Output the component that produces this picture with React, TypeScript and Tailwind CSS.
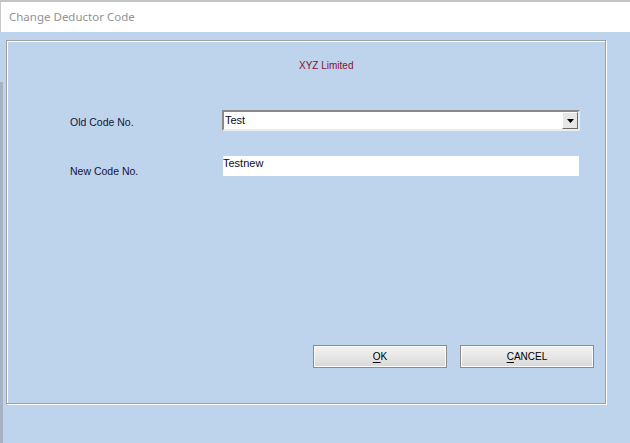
import React from "react";

// Classic WinForms-style dialog: "Change Deductor Code"

function Underlined({ first, rest }: { first: string; rest: string }) {
  return (
    <span>
      <span className="underline underline-offset-[2px]">{first}</span>
      {rest}
    </span>
  );
}

function DialogButton({ children }: { children: React.ReactNode }) {
  return (
    <button
      type="button"
      className="w-[134px] h-[23px] border border-[#8c8c8c] bg-gradient-to-b from-[#f4f4f4] to-[#d9d9d9] shadow-[inset_0_0_0_1px_#fcfcfc] text-[10px] leading-[13px] text-black flex items-center justify-center"
    >
      {children}
    </button>
  );
}

export default function App() {
  return (
    <div
      className="w-[630px] h-[443px] overflow-hidden bg-[#bed3ec] flex flex-col"
      style={{ fontFamily: '"Liberation Sans", Arial, sans-serif' }}
    >
      {/* behind-window edge */}
      <div className="h-[2px] bg-[#c4c4c4]" />

      {/* ── Title bar ─────────────────────────────────────────── */}
      <div
        className="h-[30px] bg-white border-l border-[#c8c8c8] flex items-center pl-[8px] pb-[1px] text-[11.5px] text-[#929292]"
        style={{ fontFamily: '"Noto Sans", "Open Sans", sans-serif' }}
      >
        Change Deductor Code
      </div>

      {/* ── Body ──────────────────────────────────────────────── */}
      <div className="flex-1 flex">
        <div className="w-[3px] pt-[50px]">
          <div className="h-full bg-[#a6b3c4]" />
        </div>

        <div className="pl-[3px] pt-[8px]">
          {/* Group box */}
          <div className="w-[600px] h-[364px] border border-[#a0a0a0] shadow-[1px_1px_0_#ffffff,inset_1px_1px_0_#ffffff] flex flex-col">
            <div className="mt-[18px] pl-[292px] text-[10px] leading-[13px] text-[#8b0f2f]">
              XYZ Limited
            </div>

            {/* Old code row */}
            <div className="mt-[38px] flex items-start h-[21px]">
              <div className="w-[215px] pl-[63px] mt-[6px] text-[10.5px] leading-[13px] text-[#15153a]">
                Old Code No.
              </div>
              <div className="w-[358px] h-[21px] border-2 border-t-[#8a8a8a] border-l-[#8a8a8a] border-b-[#ececec] border-r-[#ececec] bg-white flex items-center">
                <span className="flex-1 pl-[1px] text-[11px] leading-[13px] text-[#0a0a28]">Test</span>
                <div className="w-[16px] h-[17px] bg-[#e6e6e6] border border-t-white border-l-white border-b-[#6a6a6a] border-r-[#6a6a6a] flex items-center justify-center">
                  <svg width="7" height="4" viewBox="0 0 7 4" className="mt-[1px]">
                    <path d="M0 0H7L3.5 4Z" fill="#000" />
                  </svg>
                </div>
              </div>
            </div>

            {/* New code row */}
            <div className="mt-[25px] flex items-start h-[20px]">
              <div className="w-[216px] pl-[63px] mt-[9px] text-[10.5px] leading-[13px] text-[#15153a]">
                New Code No.
              </div>
              <div className="w-[356px] h-[20px] bg-white pt-[1px] text-[11px] leading-[13px] text-[#0a0a28]">
                Testnew
              </div>
            </div>

            {/* Buttons */}
            <div className="mt-[169px] pl-[306px] flex gap-[13px]">
              <DialogButton>
                <Underlined first="O" rest="K" />
              </DialogButton>
              <DialogButton>
                <Underlined first="C" rest="ANCEL" />
              </DialogButton>
            </div>
          </div>
        </div>
      </div>
    </div>
  );
}
